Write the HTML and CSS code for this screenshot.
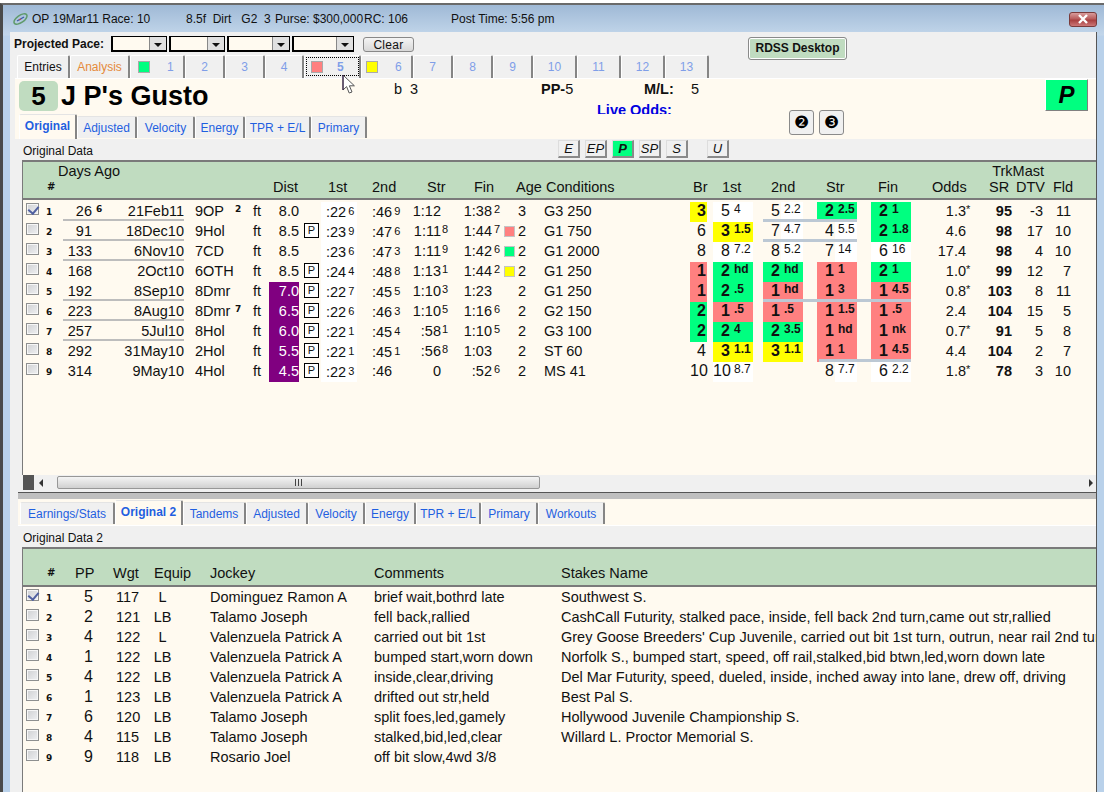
FILE: index.html
```html
<!DOCTYPE html>
<html lang="en">
<head>
<meta charset="utf-8">
<title>RDSS</title>
<link rel="stylesheet" href="styles.css">
</head>
<body>
<div class="win">
  <div class="title">
    <svg class="ticon" width="15" height="14" viewBox="0 0 15 14"><ellipse cx="7.5" cy="7" rx="7.5" ry="3.6" transform="rotate(-35 7.5 7)" fill="none" stroke="#5f9a6a" stroke-width="1.5"/><path d="M4 9 L11 5" stroke="#3a5aa8" stroke-width="1.3"/><path d="M6 8 L8 7" stroke="#c05050" stroke-width="1.3"/></svg>
    <span class="t-a">OP 19Mar11 Race: 10</span>
    <span class="t-b">8.5f&nbsp; Dirt&nbsp;&nbsp; G2&nbsp; 3</span>
    <span class="t-c">Purse: $300,000</span>
    <span class="t-d">RC: 106</span>
    <span class="t-e">Post Time: 5:56 pm</span>
    <span class="close"><svg width="14" height="10" viewBox="0 0 14 10"><path d="M3 1 L11 9 M11 1 L3 9" stroke="#fff" stroke-width="2.4"/></svg></span>
  </div>
  <div class="panel">
    <div class="pace">
      <b class="pace-l">Projected Pace:</b>
      <span class="sel s1"><i></i></span>
      <span class="sel s1"><i></i></span>
      <span class="sel s2"><i></i></span>
      <span class="sel s3"><i></i></span>
      <span class="clear">Clear</span>
      <span class="rdss">RDSS Desktop</span>
    </div>
    <div class="tabs main">
      <span class="tab ink">Entries</span>
      <span class="tab org">Analysis</span>
      <span class="tab num sw1"><em class="chip green"></em><u>1</u></span>
      <span class="tab num">2</span>
      <span class="tab num">3</span>
      <span class="tab num">4</span>
      <span class="tab num sw5 cur"><em class="chip red"></em><u>5</u></span>
      <span class="tab num sw6"><em class="chip yellow"></em><u>6</u></span>
      <span class="tab num">7</span>
      <span class="tab num">8</span>
      <span class="tab num">9</span>
      <span class="tab num">10</span>
      <span class="tab num">11</span>
      <span class="tab num">12</span>
      <span class="tab num">13</span>
    </div>
    <div class="horse">
      <span class="hnum">5</span>
      <span class="hname">J P's Gusto</span>
      <span class="hb">b&nbsp; 3</span>
      <span class="hpp"><b>PP-</b>5</span>
      <span class="hlive">Live Odds:</span>
      <span class="hml"><b>M/L:</b></span>
      <span class="hmlv">5</span>
      <span class="hbig">P</span>
      <div class="tabs upper">
        <span class="tab act">Original</span>
        <span class="tab">Adjusted</span>
        <span class="tab">Velocity</span>
        <span class="tab">Energy</span>
        <span class="tab">TPR + E/L</span>
        <span class="tab">Primary</span>
      </div>
      <span class="circ c-two">❷</span>
      <span class="circ c-three">❸</span>
    </div>
    <div class="strip">
      <span class="strip-l">Original Data</span>
      <span class="sb">E</span><span class="sb">EP</span><span class="sb on">P</span><span class="sb">SP</span><span class="sb">S</span><span class="sb u">U</span>
    </div>
    <div class="table top">
      <div class="hdr">
        <div class="h1"><span>Days Ago</span><span>TrkMast</span></div>
        <div class="h2">
          <span class="hash">#</span><span>Dist</span><span>1st</span><span>2nd</span><span>Str</span><span>Fin</span><span>Age</span><span>Conditions</span><span>Br</span><span>1st</span><span>2nd</span><span>Str</span><span>Fin</span><span>Odds</span><span>SR</span><span>DTV</span><span>Fld</span>
        </div>
      </div>
      <div class="rows">
        <div class="row"><span class="ck on"></span><span class="n">1</span><span class="d">26</span><span class="ds">6</span><span class="dt">21Feb11</span><span class="tk">9OP</span><span class="ts">2</span><span class="ft">ft</span><span class="di">8.0</span><span class="t1">:22<small>6</small></span><span class="t2">:46<small>9</small></span><span class="st">1:12</span><span class="fi">1:38</span><span class="fs">2</span><span class="ag">3</span><span class="co">G3 250</span><span class="br hy">3</span><span class="c1 rk wh"><b>5</b><i>4</i></span><span class="c2 rk wp"><b>5</b><i>2.2</i></span><span class="c3 rk hg"><b>2</b><i>2.5</i></span><span class="c4 rk hg"><b>2</b><i>1</i></span><span class="od">1.3</span><span class="sr">*</span><span class="rt">95</span><span class="dv">-3</span><span class="fl">11</span><span class="ll"></span><span class="lr"></span></div>
        <div class="row"><span class="ck"></span><span class="n">2</span><span class="d">91</span><span class="dt">18Dec10</span><span class="tk">9Hol</span><span class="ft">ft</span><span class="di">8.5</span><span class="pb">P</span><span class="t1">:23<small>9</small></span><span class="t2">:47<small>6</small></span><span class="st">1:11</span><span class="ss">8</span><span class="fi">1:44</span><span class="fs">7</span><span class="sw red"></span><span class="ag">2</span><span class="co">G1 750</span><span class="br">6</span><span class="c1 rk hy"><b>3</b><i>1.5</i></span><span class="c2 rk wp"><b>7</b><i>4.7</i></span><span class="c3 rk wp"><b>4</b><i>5.5</i></span><span class="c4 rk hg"><b>2</b><i>1.8</i></span><span class="od">4.6</span><span class="rt">98</span><span class="dv">17</span><span class="fl">10</span><span class="ll"></span><span class="lr"></span></div>
        <div class="row"><span class="ck"></span><span class="n">3</span><span class="d">133</span><span class="dt">6Nov10</span><span class="tk">7CD</span><span class="ft">ft</span><span class="di">8.5</span><span class="t1">:23<small>6</small></span><span class="t2">:47<small>3</small></span><span class="st">1:11</span><span class="ss">9</span><span class="fi">1:42</span><span class="fs">6</span><span class="sw green"></span><span class="ag">2</span><span class="co">G1 2000</span><span class="br">8</span><span class="c1 rk wh"><b>8</b><i>7.2</i></span><span class="c2 rk wp"><b>8</b><i>5.2</i></span><span class="c3 rk wp"><b>7</b><i>14</i></span><span class="c4 rk wh"><b>6</b><i>16</i></span><span class="od">17.4</span><span class="rt">98</span><span class="dv">4</span><span class="fl">10</span><span class="ll"></span></div>
        <div class="row"><span class="ck"></span><span class="n">4</span><span class="d">168</span><span class="dt">2Oct10</span><span class="tk">6OTH</span><span class="ft">ft</span><span class="di">8.5</span><span class="pb">P</span><span class="t1">:24<small>4</small></span><span class="t2">:48<small>8</small></span><span class="st">1:13</span><span class="ss">1</span><span class="fi">1:44</span><span class="fs">2</span><span class="sw yellow"></span><span class="ag">2</span><span class="co">G1 250</span><span class="br hr">1</span><span class="c1 rk hg"><b>2</b><i>hd</i></span><span class="c2 rk hg"><b>2</b><i>hd</i></span><span class="c3 rk hr"><b>1</b><i>1</i></span><span class="c4 rk hg"><b>2</b><i>1</i></span><span class="od">1.0</span><span class="sr">*</span><span class="rt">99</span><span class="dv">12</span><span class="fl">7</span></div>
        <div class="row"><span class="ck"></span><span class="n">5</span><span class="d">192</span><span class="dt">8Sep10</span><span class="tk">8Dmr</span><span class="ft">ft</span><span class="di pu">7.0</span><span class="pb">P</span><span class="t1">:22<small>7</small></span><span class="t2">:45<small>5</small></span><span class="st">1:10</span><span class="ss">3</span><span class="fi">1:23</span><span class="ag">2</span><span class="co">G1 250</span><span class="br hr">1</span><span class="c1 rk hg"><b>2</b><i>.5</i></span><span class="c2 rk hr"><b>1</b><i>hd</i></span><span class="c3 rk hr"><b>1</b><i>3</i></span><span class="c4 rk hr"><b>1</b><i>4.5</i></span><span class="od">0.8</span><span class="sr">*</span><span class="rt">103</span><span class="dv">8</span><span class="fl">11</span><span class="ll"></span><span class="lw"></span></div>
        <div class="row"><span class="ck"></span><span class="n">6</span><span class="d">223</span><span class="dt">8Aug10</span><span class="tk">8Dmr</span><span class="ts">7</span><span class="ft">ft</span><span class="di pu">6.5</span><span class="pb">P</span><span class="t1">:22<small>6</small></span><span class="t2">:46<small>3</small></span><span class="st">1:10</span><span class="ss">5</span><span class="fi">1:16</span><span class="fs">6</span><span class="ag">2</span><span class="co">G2 150</span><span class="br hg">2</span><span class="c1 rk hr"><b>1</b><i>.5</i></span><span class="c2 rk hr"><b>1</b><i>.5</i></span><span class="c3 rk hr"><b>1</b><i>1.5</i></span><span class="c4 rk hr"><b>1</b><i>.5</i></span><span class="od">2.4</span><span class="rt">104</span><span class="dv">15</span><span class="fl">5</span><span class="ll"></span></div>
        <div class="row"><span class="ck"></span><span class="n">7</span><span class="d">257</span><span class="dt">5Jul10</span><span class="tk">8Hol</span><span class="ft">ft</span><span class="di pu">6.0</span><span class="pb">P</span><span class="t1">:22<small>1</small></span><span class="t2">:45<small>4</small></span><span class="st">:58</span><span class="ss">1</span><span class="fi">1:10</span><span class="fs">5</span><span class="ag">2</span><span class="co">G3 100</span><span class="br hg">2</span><span class="c1 rk hg"><b>2</b><i>4</i></span><span class="c2 rk hg"><b>2</b><i>3.5</i></span><span class="c3 rk hr"><b>1</b><i>hd</i></span><span class="c4 rk hr"><b>1</b><i>nk</i></span><span class="od">0.7</span><span class="sr">*</span><span class="rt">91</span><span class="dv">5</span><span class="fl">8</span><span class="ll"></span></div>
        <div class="row"><span class="ck"></span><span class="n">8</span><span class="d">292</span><span class="dt">31May10</span><span class="tk">2Hol</span><span class="ft">ft</span><span class="di pu">5.5</span><span class="pb">P</span><span class="t1">:22<small>1</small></span><span class="t2">:45<small>1</small></span><span class="st">:56</span><span class="ss">8</span><span class="fi">1:03</span><span class="ag">2</span><span class="co">ST 60</span><span class="br">4</span><span class="c1 rk hy"><b>3</b><i>1.1</i></span><span class="c2 rk hy"><b>3</b><i>1.1</i></span><span class="c3 rk hr"><b>1</b><i>1</i></span><span class="c4 rk hr"><b>1</b><i>4.5</i></span><span class="od">4.4</span><span class="rt">104</span><span class="dv">2</span><span class="fl">7</span><span class="lx"></span></div>
        <div class="row"><span class="ck"></span><span class="n">9</span><span class="d">314</span><span class="dt">9May10</span><span class="tk">4Hol</span><span class="ft">ft</span><span class="di pu">4.5</span><span class="pb">P</span><span class="t1">:22<small>3</small></span><span class="t2">:46</span><span class="st">0</span><span class="fi">:52</span><span class="fs">6</span><span class="ag">2</span><span class="co">MS 41</span><span class="br">10</span><span class="c1 rk wh"><b>10</b><i>8.7</i></span><span class="c3 rk wp"><b>8</b><i>7.7</i></span><span class="c4 rk wh"><b>6</b><i>2.2</i></span><span class="od">1.8</span><span class="sr">*</span><span class="rt">78</span><span class="dv">3</span><span class="fl">10</span></div>
      </div>
    </div>
    <div class="scroll">
      <span class="sq"></span>
      <span class="arr-l"></span>
      <span class="thumb"><span class="grip"></span></span>
      <span class="arr-r"></span>
    </div>
    <div class="split"></div>
    <div class="lowbar">
      <div class="tabs lower">
        <span class="tab">Earnings/Stats</span>
        <span class="tab act">Original 2</span>
        <span class="tab">Tandems</span>
        <span class="tab">Adjusted</span>
        <span class="tab">Velocity</span>
        <span class="tab">Energy</span>
        <span class="tab">TPR + E/L</span>
        <span class="tab">Primary</span>
        <span class="tab">Workouts</span>
      </div>
    </div>
    <div class="strip">
      <span class="strip-l">Original Data 2</span>
    </div>
    <div class="table bottom">
      <div class="hdr low">
        <span class="hash">#</span><span>PP</span><span>Wgt</span><span>Equip</span><span>Jockey</span><span>Comments</span><span>Stakes Name</span>
      </div>
      <div class="lrows">
        <div class="lrow"><span class="ck on"></span><span class="n">1</span><span class="pp">5</span><span class="wg">117</span><span class="eq">L</span><span class="jo">Dominguez Ramon A</span><span>brief wait,bothrd late</span><span>Southwest S.</span></div>
        <div class="lrow"><span class="ck"></span><span class="n">2</span><span class="pp">2</span><span class="wg">121</span><span class="eq">LB</span><span class="jo">Talamo Joseph</span><span>fell back,rallied</span><span>CashCall Futurity, stalked pace, inside, fell back 2nd turn,came out str,rallied</span></div>
        <div class="lrow"><span class="ck"></span><span class="n">3</span><span class="pp">4</span><span class="wg">122</span><span class="eq">L</span><span class="jo">Valenzuela Patrick A</span><span>carried out bit 1st</span><span>Grey Goose Breeders' Cup Juvenile, carried out bit 1st turn, outrun, near rail 2nd turn</span></div>
        <div class="lrow"><span class="ck"></span><span class="n">4</span><span class="pp">1</span><span class="wg">122</span><span class="eq">LB</span><span class="jo">Valenzuela Patrick A</span><span>bumped start,worn down</span><span>Norfolk S., bumped start, speed, off rail,stalked,bid btwn,led,worn down late</span></div>
        <div class="lrow"><span class="ck"></span><span class="n">5</span><span class="pp">4</span><span class="wg">122</span><span class="eq">LB</span><span class="jo">Valenzuela Patrick A</span><span>inside,clear,driving</span><span>Del Mar Futurity, speed, dueled, inside, inched away into lane, drew off, driving</span></div>
        <div class="lrow"><span class="ck"></span><span class="n">6</span><span class="pp">1</span><span class="wg">123</span><span class="eq">LB</span><span class="jo">Valenzuela Patrick A</span><span>drifted out str,held</span><span>Best Pal S.</span></div>
        <div class="lrow"><span class="ck"></span><span class="n">7</span><span class="pp">6</span><span class="wg">120</span><span class="eq">LB</span><span class="jo">Talamo Joseph</span><span>split foes,led,gamely</span><span>Hollywood Juvenile Championship S.</span></div>
        <div class="lrow"><span class="ck"></span><span class="n">8</span><span class="pp">4</span><span class="wg">115</span><span class="eq">LB</span><span class="jo">Talamo Joseph</span><span>stalked,bid,led,clear</span><span>Willard L. Proctor Memorial S.</span></div>
        <div class="lrow"><span class="ck"></span><span class="n">9</span><span class="pp">9</span><span class="wg">118</span><span class="eq">LB</span><span class="jo">Rosario Joel</span><span>off bit slow,4wd 3/8</span><span></span></div>
      </div>
    </div>
  </div>
  <svg class="cursor" width="14" height="21" viewBox="0 0 14 21"><path d="M1 1 L1 16 L4.6 12.6 L7.2 19 L10 18 L7.4 11.8 L12.4 11.8 Z" fill="#fff" stroke="#555" stroke-width="1"/><path d="M1 1 L1 16" stroke="#2a1040" stroke-width="1"/></svg>
</div>
</body>
</html>
```
FILE: styles.css
```css
* { box-sizing: border-box; }
html, body { margin: 0; padding: 0; }
body {
  width: 1104px; height: 792px; overflow: hidden; background: #fff;
  font-family: "Liberation Sans", Arial, sans-serif; font-size: 14.5px; color: #111;
  padding-top: 3px;
}
.win {
  position: relative; height: 789px; display: flex; flex-direction: column;
  border-top: 2px solid #6a6a6a; border-left: 3px solid #4a4a4a;
  background: linear-gradient(#9fb9d6 0, #c2d6ea 30px, #b9d1ea 31px);
}
.title {
  height: 27px; flex: none; display: grid; align-items: center;
  grid-template-columns: 10px 19px 154px 89px 89px 87px 618px 28px;
  font-size: 12px; color: #111;
}
.ticon { grid-column: 1 / 3; justify-self: end; margin-right: 4px; }
.t-a { grid-column: 3; }
.close {
  grid-column: 8; height: 15px; display: flex; align-items: center; justify-content: center;
  margin-top: 1px; border: 1px solid #7a3b3b; border-radius: 3px;
  background: linear-gradient(#d99c9c, #b95d5d 45%, #a83f3f 55%, #c77);
}
.panel {
  flex: 1; min-height: 0; margin: 0 7px 0 7px; display: flex; flex-direction: column;
  background: #f0f0f0; border-right: 1px solid #555; overflow: hidden;
}
.pace {
  height: 23px; flex: none; display: flex; align-items: flex-start; padding: 4px 0 0 4px;
  overflow: visible;
}
.panel { overflow: visible; }
.pace-l { font-size: 12px; width: 97px; line-height: 16px; }
.sel {
  height: 16px; border: 1px solid #000; border-width: 1px 1px 2px 2px; background: #fffaf0;
  display: flex; justify-content: flex-end; margin-right: 2px;
}
.s1 { width: 56px; }
.s2 { width: 63px; }
.s3 { width: 62px; margin-right: 9px; }
.sel i {
  width: 17px; background: #e0e0e0; border-left: 1px solid #888; display: flex;
  align-items: center; justify-content: center;
}
.sel i::after {
  content: ""; border: 4px solid transparent; border-top: 4px solid #111; border-bottom: 0; margin-top: 3px;
}
.clear {
  width: 51px; height: 15px; margin-top: 1px; text-align: center; font-size: 12px; line-height: 14px;
  border: 1px solid #888; border-radius: 3px; background: linear-gradient(#f4f4f4, #d8d8d8);
  letter-spacing: .3px;
}
.rdss {
  width: 99px; height: 23px; margin: 1px 0 0 334px; text-align: center; font-size: 12px; font-weight: bold;
  line-height: 21px; background: #c0dcc0; border: 1px solid #8a8a8a; border-radius: 3px; box-shadow: inset 0 0 0 1px #fff;
}
.tabs { display: grid; align-items: end; }
.tab {
  height: 22px; display: flex; align-items: center; justify-content: center; font-size: 12px; color: #1f5fe0;
  background: #f0f0f0; border-top: 1px solid #e4e4e4; border-left: 1px solid #fff;
  border-right: 2px solid #858585; border-radius: 2px 2px 0 0; white-space: nowrap;
}
.main {
  height: 23px; flex: none; margin-left: 7px;
  grid-template-columns: 53px 60px 55px 40px 40px 39px 57px 52px 40px 40px 40px 44px 44px 44px 44px;
}
.main .tab { height: 23px; background: #f0f0f0; border-top-color: #fff; }
.ink { color: #111; }
.org { color: #e58a3a; }
.num { color: #7f9ee8; }
.num u { text-decoration: none; }
.sw1, .sw5, .sw6 { justify-content: flex-start; padding-left: 7px; }
.sw1 u { margin-left: 17px; }
.sw5 u { margin-left: 14px; font-weight: bold; }
.sw6 u { margin-left: 17px; }
.sw5 { padding-left: 6px; }
.sw6 { padding-left: 4px; }
.cur { outline: 1px dotted #000; outline-offset: -3px; }
.chip { width: 12px; height: 12px; border: 1px solid #aaa; display: block; margin-bottom: 1px; }
.green { background: #00ff80; }
.red { background: #ff8080; }
.yellow { background: #ffff00; }

.horse {
  flex: none; height: 61px; margin-left: 5px; background: #fffaf0; border-top: 1px solid #fff;
  display: grid;
  grid-template-rows: 31px 25px 4px;
  grid-template-columns: 4px 39px 336px 147px 56px 47px 47px 98px 25px 5px 25px 201px 43px 8px;
}
.hnum {
  grid-column: 2; grid-row: 1; height: 30px; margin-top: 2px; background: #c0dcc0; border-radius: 5px;
  text-align: center; font-weight: bold; font-size: 26px; line-height: 30px; color: #000;
}
.hname { grid-column: 3; grid-row: 1; margin: 2px 0 0 3px; font-weight: bold; font-size: 27px; line-height: 30px; color: #000; }
.hb { grid-column: 4; grid-row: 1; margin-top: 1px; line-height: 18px; }
.hpp { grid-column: 5; grid-row: 1; margin-top: 1px; line-height: 18px; }
.hml { grid-column: 6 / 8; grid-row: 1; margin: 1px 0 0 47px; line-height: 18px; }
.hmlv { grid-column: 8; grid-row: 1; margin-top: 1px; line-height: 18px; }
.hlive {
  grid-column: 6 / 8; grid-row: 1 / 3; margin-top: 24px; height: 11px; overflow: hidden; white-space: nowrap;
  font-weight: bold; color: #0000e0; line-height: 14px;
}
.hbig {
  grid-column: 13; grid-row: 1; height: 32px; background: #00ff80; border-right: 1px solid #808080; border-bottom: 1px solid #808080;
  border-top: 1px solid #fff; border-left: 1px solid #fff;
  font: italic bold 24px/30px "Liberation Sans", sans-serif; text-align: center; color: #000;
}
.upper {
  grid-column: 2 / 4; grid-row: 1 / 4; align-self: end; height: 25px;
  grid-template-columns: 58px 60px 58px 50px 66px 56px;
}
.act { height: 25px; background: #fffaf0; font-weight: bold; padding-bottom: 3px; }
.upper .tab:not(.act), .lower .tab:not(.act) { margin-bottom: 1px; }
.circ {
  grid-row: 2; height: 25px; display: flex; align-items: center; justify-content: center;
  background: #f0f0f0; border: 1px solid #8a8a8a; border-radius: 3px; font: 17px/1 "DejaVu Sans", sans-serif; color: #000;
}
.c-two { grid-column: 9; }
.c-three { grid-column: 11; }

.strip { flex: none; height: 21px; display: flex; align-items: flex-start; padding-left: 13px; }
.strip-l { width: 535px; font-size: 12px; line-height: 24px; flex: none; }
.sb {
  width: 22px; height: 18px; margin: 1px 5px 0 0; flex: none; text-align: center; font-size: 13px; font-style: italic;
  line-height: 16px; background: #f0f0f0; border: 1px solid #ddd; border-right: 2px solid #8a8a8a; border-bottom: 2px solid #8a8a8a;
}
.sb.on { background: #00ff80; font-weight: bold; }
.sb.u { margin-left: 14px; }

.table { flex: none; margin-left: 12px; background: #fffaf0; border-top: 2px solid #7a7a7a; border-left: 1px solid #7a7a7a; }
.top { height: 315px; }
.bottom { flex: 1; min-height: 0; height: 245px; }
.hdr { background: #c0dcc0; height: 38px; border-bottom: 2px solid #7a7a7a; line-height: 18px; }
.h1 { height: 16px; display: flex; justify-content: space-between; padding: 0 52px 0 35px; }
.h2 {
  display: grid; padding-left: 24px;
  grid-template-columns: 226px 55px 44px 55px 47px 42px 30px 147px 29px 49px 55px 52px 54px 57px 27px 37px 1fr;
}
.hash { font: bold 10px/18px "DejaVu Sans", sans-serif; }
.low {
  display: grid; padding: 15px 0 0 24px;
  grid-template-columns: 28px 38px 41px 56px 164px 187px 1fr;
}
.rows { padding-top: 2px; }
.row {
  display: grid; height: 20px; line-height: 18px; white-space: nowrap;
  grid-template-columns: 20px 20px 29px 12px 80px 51px 18px 16px 30px 22px 36px 53px 31px 14px 37px 11px 13px 14px 160px 17px 6px 40px 10px 40px 14px 40px 14px 40px 55px 8px 38px 31px 28px 1fr;
}
.row > * { grid-row: 1; }
.ck {
  grid-column: 1; width: 13px; height: 12px; margin: 1px 0 0 3px; position: relative;
  border: 1px solid #8e8f8f; background: linear-gradient(135deg, #cfd0d2, #eff0f2); box-shadow: inset 0 0 0 1px #f6f6f6;
}
.ck.on::after {
  content: ""; position: absolute; left: 3px; top: 0; width: 5px; height: 8px;
  border: solid #5060a0; border-width: 0 2px 2px 0; transform: rotate(40deg);
}
.n { grid-column: 2; padding-left: 3px; font: bold 9px/20px "DejaVu Sans", sans-serif; }
.d { grid-column: 3; text-align: right; }
.ds { grid-column: 4; padding-left: 4px; font: bold 9px/15px "DejaVu Sans", sans-serif; }
.dt { grid-column: 5; text-align: right; }
.tk { grid-column: 6; padding-left: 11px; }
.ts { grid-column: 7; font: bold 9px/15px "DejaVu Sans", sans-serif; }
.ft { grid-column: 8; }
.di { grid-column: 9; text-align: right; }
.pu { background: #800080; color: #fff; }
.pb {
  grid-column: 10; width: 15px; height: 15px; margin: 1px 0 0 5px; border: 1px solid #000; text-align: center;
  font-size: 11px; line-height: 13px; background: #fff;
}
.row .di.pu + .pb { background: #fff; }
.t1 { grid-column: 11; background: #fff; padding-left: 5px; }
.t2 { grid-column: 12; padding-left: 15px; }
.row small { font-size: 11px; vertical-align: 2px; margin-left: 2px; }
.st { grid-column: 13; text-align: right; }
.ss { grid-column: 14; padding-left: 1px; font-size: 11px; line-height: 15px; }
.fi { grid-column: 15; text-align: right; }
.fs { grid-column: 16; padding-left: 2px; font-size: 11px; line-height: 15px; }
.sw { grid-column: 17; width: 11px; height: 11px; margin: 4px 0 0 1px; border: 1px solid #c4c4c4; }
.ag { grid-column: 18; text-align: right; padding-right: 4px; }
.co { grid-column: 19; padding-left: 14px; }
.br { grid-column: 20; text-align: right; padding-right: 1px; font-size: 16px; }
.br.hy, .br.hr, .br.hg { font-weight: bold; }
.hy { background: #ffff00; }
.hr { background: #ff8080; }
.hg { background: #00ff80; }
.wh { background: #fff; }
.wp { background: linear-gradient(90deg, transparent 18px, #fff 18px); }
.c1 { grid-column: 22; }
.c2 { grid-column: 24; }
.c3 { grid-column: 26; }
.c4 { grid-column: 28; }
.rk { display: flex; align-items: flex-start; }
.rk b { width: 17px; flex: none; text-align: right; font-weight: normal; font-size: 16px; }
.rk i { margin-left: 4px; font-style: normal; font-size: 12px; line-height: 14px; }
.hy b, .hr b, .hg b, .hy i, .hr i, .hg i { font-weight: bold; }
.od { grid-column: 29; text-align: right; }
.sr { grid-column: 30; font-size: 11px; line-height: 14px; }
.rt { grid-column: 31; text-align: right; font-weight: bold; }
.dv { grid-column: 32; text-align: right; }
.fl { grid-column: 33; text-align: right; }
.ll { grid-column: 3 / 6; height: 2px; align-self: end; margin-bottom: 1px; background: #bdbdbd; }
.lr, .lw, .lx { height: 3px; align-self: end; background: #bcc8d4; }
.lr { grid-column: 24 / 27; }
.lw { grid-column: 24 / 29; }
.lx { grid-column: 26 / 29; margin-left: 2px; }

.scroll {
  flex: none; height: 15px; margin: 0 0 2px 13px; display: flex; align-items: center; background: #f0f0f0;
}
.sq { width: 11px; height: 15px; background: #555; flex: none; }
.arr-l { border: 4px solid transparent; border-right: 4px solid #333; border-left: 0; margin: 0 14px 0 5px; flex: none; }
.thumb {
  width: 483px; height: 13px; flex: none; display: flex; align-items: center; justify-content: center;
  border: 1px solid #979797; border-radius: 2px; background: linear-gradient(#f4f4f4, #d0d0d0);
}
.grip { width: 8px; height: 7px; background: repeating-linear-gradient(90deg, #444 0 1px, transparent 1px 3px); }
.arr-r { margin-left: auto; margin-right: 3px; border: 4px solid transparent; border-left: 4px solid #333; border-right: 0; }
.split { flex: none; height: 7px; margin-left: 8px; background: #bfbfbf; border-top: 1px solid #555; }
.lowbar { flex: none; height: 27px; margin-left: 8px; background: #fffaf0; padding: 1px 0 0 2px; border-bottom: 1px solid #fff; }
.lower {
  height: 25px;
  grid-template-columns: 95px 68px 63px 62px 57px 51px 65px 57px 67px; justify-content: start;
}
.lrows { padding-top: 1px; }
.lrow {
  display: grid; height: 20px; line-height: 18px; white-space: nowrap; overflow: hidden;
  grid-template-columns: 20px 20px 37px 50px 25px 199px 187px 1fr;
}
.lrow .ck { grid-column: auto; }
.lrow .n { grid-column: auto; }
.pp { padding-left: 21px; font-size: 16px; }
.wg { padding-left: 16px; }
.eq { text-align: center; }
.jo { padding-left: 35px; }
.cursor { position: absolute; left: 339px; top: 69px; }
```
